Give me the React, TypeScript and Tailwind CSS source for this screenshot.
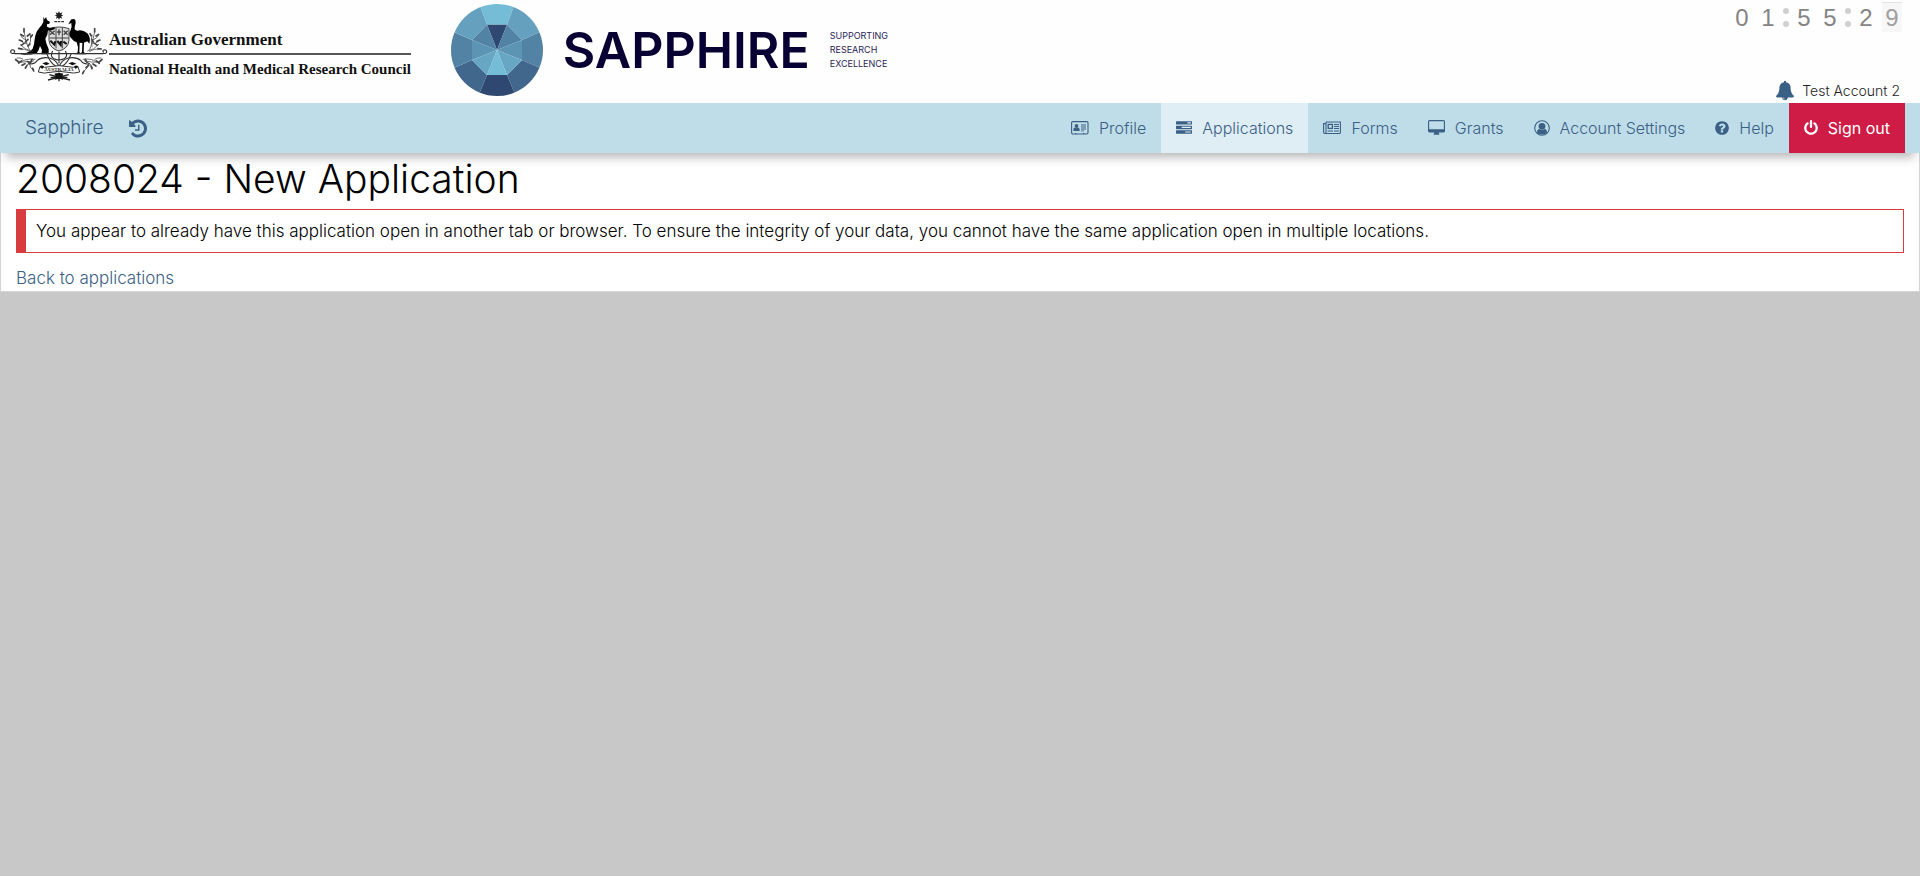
import type { ReactNode } from 'react';

const glyphs = {
  history: {
    box: '0 0 1536 1792',
    d: 'M1536 896q0 156-61 298t-164 245-245 164-298 61q-172 0-327-72.5t-264-204.5q-7-10-6.5-22.5t8.5-20.5l137-138q10-9 25-9 16 2 23 12 73 95 179 147t225 52q104 0 198.5-40.5t163.5-109.5 109.5-163.5 40.5-198.5-40.5-198.5-109.5-163.5-163.5-109.5-198.5-40.5q-98 0-188 35.5t-160 101.5l137 138q31 30 14 69-17 40-59 40h-448q-26 0-45-19t-19-45v-448q0-42 40-59 39-17 69 14l130 129q107-101 244.5-156.5t284.5-55.5q156 0 298 61t245 164 164 245 61 298zm-640-288v448q0 14-9 23t-23 9h-320q-14 0-23-9t-9-23v-64q0-14 9-23t23-9h224v-352q0-14 9-23t23-9h64q14 0 23 9t9 23z',
  },
  tasks: {
    box: '0 0 1792 1792',
    d: 'M1024 1408h640v-128h-640v128zm-384-512h1024v-128h-1024v128zm640-512h384v-128h-384v128zm512 832v256q0 26-19 45t-45 19h-1664q-26 0-45-19t-19-45v-256q0-26 19-45t45-19h1664q26 0 45 19t19 45zm0-512v256q0 26-19 45t-45 19h-1664q-26 0-45-19t-19-45v-256q0-26 19-45t45-19h1664q26 0 45 19t19 45zm0-512v256q0 26-19 45t-45 19h-1664q-26 0-45-19t-19-45v-256q0-26 19-45t45-19h1664q26 0 45 19t19 45z',
  },
  desktop: {
    box: '-64 0 1920 1792',
    d: 'M1728 992v-832q0-13-9.5-22.5t-22.5-9.5h-1600q-13 0-22.5 9.5t-9.5 22.5v832q0 13 9.5 22.5t22.5 9.5h1600q13 0 22.5-9.5t9.5-22.5zm128-832v1088q0 66-47 113t-113 47h-544q0 37 16 77.5t32 71 16 43.5q0 26-19 45t-45 19h-512q-26 0-45-19t-19-45q0-14 16-44t32-70 16-78h-544q-66 0-113-47t-47-113v-1088q0-66 47-113t113-47h1600q66 0 113 47t47 113z',
  },
  help: {
    box: '128 0 1536 1792',
    d: 'M1024 1376v-192q0-14-9-23t-23-9h-192q-14 0-23 9t-9 23v192q0 14 9 23t23 9h192q14 0 23-9t9-23zm256-672q0-88-55.5-163t-138.5-116-170-41q-243 0-371 213-15 24 8 42l132 100q7 6 19 6 16 0 25-12 53-68 86-92 34-24 86-24 48 0 85.5 26t37.5 59q0 38-20 61t-68 45q-63 28-115.5 86.5t-52.5 125.5v36q0 14 9 23t23 9h192q14 0 23-9t9-23q0-19 21.5-49.5t54.5-49.5q32-18 49-28.5t46-35 44.5-48 28-60.5 12.5-81zm384 192q0 209-103 385.5t-279.5 279.5-385.5 103-385.5-103-279.5-279.5-103-385.5 103-385.5 279.5-279.5 385.5-103 385.5 103 279.5 279.5 103 385.5z',
  },
  power: {
    box: '128 0 1536 1792',
    d: 'M1664 896q0 156-61 298t-164 245-245 164-298 61-298-61-245-164-164-245-61-298q0-182 80.5-343t226.5-270q43-32 95.5-25t83.5 50q32 42 24.5 94.5t-49.5 84.5q-98 74-151.5 181t-53.5 228q0 104 40.5 198.5t109.5 163.5 163.5 109.5 198.5 40.5 198.5-40.5 163.5-109.5 109.5-163.5 40.5-198.5q0-121-53.5-228t-151.5-181q-42-32-49.5-84.5t24.5-94.5q31-43 84-50t95 25q146 109 226.5 270t80.5 343zm-640-768v640q0 52-38 90t-90 38-90-38-38-90v-640q0-52 38-90t90-38 90 38 38 90z',
  },
  bell: {
    box: '64 0 1664 1792',
    d: 'M912 1696q0-16-16-16-59 0-101.5-42.5t-42.5-101.5q0-16-16-16t-16 16q0 73 51.5 124.5t124.5 51.5q16 0 16-16zm816-288q0 52-38 90t-90 38h-448q0 106-75 181t-181 75-181-75-75-181h-448q-52 0-90-38t-38-90q50-42 91-88t85-119.5 74.5-158.5 50-206 19.5-260q0-152 117-282.5t307-158.5q-8-19-8-39 0-40 28-68t68-28 68 28 28 68q0 20-8 39 190 28 307 158.5t117 282.5q0 139 19.5 260t50 206 74.5 158.5 85 119.5 91 88z',
  },
};

function Glyph({ name, className }: { name: keyof typeof glyphs; className: string }) {
  return (
    <svg viewBox={glyphs[name].box} className={className} fill="currentColor" aria-hidden="true">
      <path d={glyphs[name].d} />
    </svg>
  );
}

function CardIcon() {
  return (
    <svg viewBox="0 0 18 14" className="h-[14px] w-[18px]" fill="currentColor" aria-hidden="true">
      <rect x="0.6" y="0.6" width="16.4" height="12.4" rx="1.2" fill="none" stroke="currentColor" strokeWidth="1.1" />
      <circle cx="5.5" cy="5" r="1.9" />
      <path d="M2.4 10V8.6Q2.4 6.8 4 6.6Q5.5 7.8 7 6.6Q8.6 6.8 8.6 8.6V10Z" />
      <path d="M10 3.6h5v1h-5zM10 5.6h5v1h-5zM10 7.6h5v1h-5zM10 9.4h3v.8h-3zM4 12h1.4v1H4zM12 12h1.4v1H12z" />
    </svg>
  );
}

function NewsIcon() {
  return (
    <svg viewBox="0 0 18 14" className="h-[14px] w-[18px]" fill="none" stroke="currentColor" aria-hidden="true">
      <path d="M3 1H17.4V11.4Q17.4 12.5 16.3 12.5H1.8Q.6 12.5 .6 11.3V2.6H3M3 1V11.2Q3 12.5 1.8 12.5" strokeWidth="1.1" />
      <rect x="5.2" y="3.4" width="4.2" height="4" strokeWidth="1.3" />
      <path d="M11 3.5h5M11 5.5h5M11 7.5h5M4.6 10h5.4M11 10h5" />
    </svg>
  );
}

function UserIcon() {
  return (
    <svg viewBox="0 0 16 16" className="size-4" fill="currentColor" aria-hidden="true">
      <circle cx="8" cy="8" r="7.3" fill="none" stroke="currentColor" strokeWidth="1.1" />
      <circle cx="8" cy="6.3" r="3.4" />
      <path d="M2.9 12.4Q3.2 9.2 5.4 8.9Q8 11 10.6 8.9Q12.8 9.2 13.1 12.4Q11 14.6 8 14.6T2.9 12.4Z" />
    </svg>
  );
}

function CoatOfArms() {
  return (
    <svg viewBox="0 0 327 300" className="h-[100px] w-[109px] shrink-0" role="img" aria-label="Coat of arms">
      <path d="M177 33l3 7 7-3-3 7 6 2-6 3 2 7-6-3-3 6-3-6-6 3 2-7-6-3 6-2-3-7 7 3z" fill="#222" />
      <path d="M163 65h8M173 65h8M184 65h8" stroke="#333" strokeWidth="4" />
      <g fill="none" stroke="#444" strokeWidth="3">
        <path d="M147 86Q177 76 207 86V122Q204 146 177 153Q150 146 147 122Z" fill="#ddd" />
        <path d="M149 114H206M168 83V145M187 83V145" />
        <path d="M150 92l14 12m0-12l-14 12M191 92l12 12m0-12l-12 12M171 96h12M177 88v18" strokeWidth="4" />
        <path d="M151 122l12 12 3-10M172 123l10 12 1-12M190 125l10 7" stroke="#111" strokeWidth="6" />
      </g>
      <path
        d="M130 50L134 58L138 51L141 60L150 66L148 71L141 73L141 80L150 84L163 82L165 87L151 92L144 91L142 104L136 116L139 130L146 148V163H124L126 150L120 138L116 150L110 160Q90 166 60 164Q84 160 98 146Q103 134 104 118Q106 98 116 86Q126 76 130 66Z"
        fill="#000"
      />
      <path
        d="M222 57Q212 56 210 64L205 73L214 69Q217 80 211 92Q204 102 213 114Q220 124 230 127L234 142L233 157L224 163H243L238 156L239 128L247 129L246 155L241 163H259L251 156L252 128L262 124L268 131Q273 112 262 100Q248 88 232 92Q222 92 224 82Q229 68 226 60Z"
        fill="#000"
      />
      <g fill="none" stroke="#333" strokeWidth="3.5">
        <path d="M44 161H310" strokeWidth="4" />
        <path d="M46 160q-14 2-14-5 1-7 9-5 6 3 0 8M308 160q13 2 12-5-1-7-9-5-5 3 0 7" />
        <path d="M177 202Q171 180 149 174Q125 170 112 181Q104 195 84 191M177 202Q183 180 205 174Q229 170 242 181Q250 195 270 191" />
        <path d="M177 190V155M177 180Q145 176 158 153M177 180Q209 176 196 153M140 160Q150 190 170 200M214 160Q204 190 184 200" />
      </g>
      <path
        d="M120 200Q132 204 150 200Q177 194 204 200Q222 204 234 200L239 216Q220 222 204 217Q177 211 150 217Q134 222 115 216Z"
        fill="#fff"
        stroke="#333"
        strokeWidth="3"
      />
      <path d="M148 224l62 16M206 224l-62 16M177 218v26M152 232h50" fill="none" stroke="#222" strokeWidth="4" />
      <g fill="#111">
        <path d="M119 200q6-7 13-1l-5 8zM235 200q-6-7-13-1l5 8zM163 221l14-3 13 3-4 9 4 9-13-3-13 3 4-9z" />
        <path d="M127 190l12-4 10 5-11 5zM205 190l12-4 12 5-12 5z" />
      </g>
      <g fill="none" stroke="#555" strokeWidth="2.5">
        <path d="M98 153Q75 151 61 132M89 151Q75 128 72 93M84 140Q95 125 92 105M58 147Q74 145 92 155M78 120Q66 116 62 106M82 130Q72 134 63 122" />
        <path d="M262 153Q281 151 297 132M268 151Q280 128 284 93M276 140Q272 122 276 104M300 147Q280 145 268 155M278 120Q290 116 296 106M276 130Q285 134 298 122" />
        <path d="M106 178Q78 174 62 187M102 182Q80 189 76 207M92 184Q66 190 46 181M88 190Q90 205 101 212M70 178Q60 172 50 174" />
        <path d="M248 178Q276 174 292 187M252 182Q274 189 278 207M262 184Q288 190 306 181M266 190Q264 205 248 218M284 178Q294 172 304 174" />
      </g>
      <path
        d="M72 86v10M62 103l8 5M82 108l8-6M58 120l9 4M76 126l8-8M64 136l8-6M56 145l10 2M92 112l5-7M84 138l6-6M284 86v10M296 103l-8 5M274 108l-4-7M300 120l-9 4M280 126l-5-8M292 136l-8-6M304 147l-10-1M47 178l8 8M56 189l9-6M66 196l9-5M76 204l5-8M82 184l9 6M98 205l3 8M306 178l-8 8M298 190l-9-7M288 198l-9-6M276 206l-3-8M266 196l-8 7M252 213l-4 8M96 178l-4 9M256 178l5 9"
        stroke="#444"
        strokeWidth="5"
        strokeLinecap="round"
      />
      <text x="177" y="214" textAnchor="middle" fontSize="15" fontWeight="700" fontFamily="Liberation Serif, serif" fill="#222">
        AUSTRALIA
      </text>
    </svg>
  );
}

function Gem() {
  return (
    <svg viewBox="0 0 276 276" className="size-[92px] shrink-0" role="img" aria-label="Sapphire gem">
      <defs>
        <clipPath id="gem-round">
          <circle cx="138" cy="138" r="138" />
        </clipPath>
      </defs>
      <g clipPath="url(#gem-round)">
        <path d="M108 62L70 -40H206L168 62Z" fill="#75bdd7" />
        <path d="M168 62L206 -40L300 40V70L213 108Z" fill="#65a1bf" />
        <path d="M213 108L290 74V202L213 168Z" fill="#5383a4" />
        <path d="M213 168L290 202L200 290L168 213Z" fill="#41678d" />
        <path d="M168 213L200 290H76L108 213Z" fill="#2f4872" />
        <path d="M108 213L76 290L-14 202L63 168Z" fill="#41678d" />
        <path d="M63 168L-14 202V74L63 108Z" fill="#5383a4" />
        <path d="M63 108L-14 74L70 -40L108 62Z" fill="#65a1bf" />
        <path d="M138 138L108 62H168Z" fill="#2f4872" />
        <path d="M138 138L168 62L213 108ZM138 138L108 62L63 108Z" fill="#5383a4" />
        <path d="M138 138L213 108V168ZM138 138L63 108V168Z" fill="#5c94b3" />
        <path d="M138 138L213 168L168 213ZM138 138L63 168L108 213Z" fill="#67a7c4" />
        <path d="M138 138L168 213H108Z" fill="#75bdd7" />
      </g>
    </svg>
  );
}

function Digit({ value, active = false }: { value: string; active?: boolean }) {
  return (
    <span
      className={
        active
          ? 'mx-[3px] w-5 border-t border-[#e4e4e4] bg-[#f7f7f7] text-center text-[#a0a0a0]'
          : 'mx-[3px] w-5 border-t border-transparent text-center'
      }
    >
      {value}
    </span>
  );
}

function Colon() {
  return (
    <span className="flex w-[10px] flex-col items-center justify-center gap-[7px]">
      <i className="size-[6px] rounded-full bg-[#d0d0d0]" />
      <i className="size-[6px] rounded-full bg-[#d0d0d0]" />
    </span>
  );
}

function NavItem({ icon, label, active = false }: { icon: ReactNode; label: string; active?: boolean }) {
  return (
    <a href="#" className={active ? 'flex items-center gap-[10px] bg-[#dfedf4] px-[15px]' : 'flex items-center gap-[10px] px-[15px]'}>
      {icon}
      {label}
    </a>
  );
}

export default function App() {
  return (
    <div className="min-h-screen bg-[#c8c8c8] font-['Inter',sans-serif] font-light text-black">
      <header className="flex h-[103px] justify-between bg-[#fefefe]">
        <div className="flex items-start">
          <CoatOfArms />
          <div className="pt-[30px] font-['Liberation_Serif',serif] leading-5 font-bold whitespace-nowrap text-[#111]">
            <p className="border-b-2 border-[#555] pb-[3px] text-[17px] leading-5">Australian Government</p>
            <p className="pt-1 text-[15px] leading-5">National Health and Medical Research Council</p>
          </div>
          <div className="flex items-center pt-1 pl-10">
            <Gem />
            <span className="pl-5 text-[50px] leading-[92px] font-semibold text-[#070033]">SAPPHIRE</span>
            <p className="pl-5 text-[9px] leading-[14px] font-normal text-[#2b2556]">
              SUPPORTING
              <br />
              RESEARCH
              <br />
              EXCELLENCE
            </p>
          </div>
        </div>
        <div className="flex flex-col items-end justify-between pt-[2px]">
          <div
            role="timer"
            className="mr-[15px] flex font-['Liberation_Sans',sans-serif] text-2xl leading-[29px] font-normal text-[#848484]"
          >
            <Digit value="0" />
            <Digit value="1" />
            <Colon />
            <Digit value="5" />
            <Digit value="5" />
            <Colon />
            <Digit value="2" />
            <Digit value="9" active />
          </div>
          <div className="mr-5 flex items-center gap-2 pb-[2px] text-sm text-[#222]">
            <Glyph name="bell" className="h-[21px] w-[18px] text-[#3b6086]" />
            Test Account 2
          </div>
        </div>
      </header>
      <nav className="relative flex h-[50px] justify-between bg-[#bfdde8] pr-[15px] text-base text-[#3b6086] shadow-[0_10px_10px_-6px_rgba(0,0,0,0.3)]">
        <div className="flex items-center gap-[26px] pl-[25px]">
          <a href="#" className="text-[19px]">
            Sapphire
          </a>
          <button type="button" aria-label="History">
            <Glyph name="history" className="h-[21px] w-[18px]" />
          </button>
        </div>
        <div className="flex">
          <NavItem icon={<CardIcon />} label="Profile" />
          <NavItem icon={<Glyph name="tasks" className="size-4" />} label="Applications" active />
          <NavItem icon={<NewsIcon />} label="Forms" />
          <NavItem icon={<Glyph name="desktop" className="h-4 w-[17px]" />} label="Grants" />
          <NavItem icon={<UserIcon />} label="Account Settings" />
          <NavItem icon={<Glyph name="help" className="h-4 w-[14px]" />} label="Help" />
          <button type="button" className="flex items-center gap-[10px] bg-[#ce1c46] px-[15px] font-normal text-white">
            <Glyph name="power" className="h-4 w-[14px]" />
            Sign out
          </button>
        </div>
      </nav>
      <main className="border border-t-0 border-[#d4d4d4] bg-white px-[15px]">
        <h1 className="pt-[3px] text-[39px] leading-[45px]">2008024 - New Application</h1>
        <p className="mt-2 border border-l-[10px] border-[#d83c3e] px-[10px] py-[10px] text-[17px] leading-[22px]">
          You appear to already have this application open in another tab or browser. To ensure the integrity of your data, you
          cannot have the same application open in multiple locations.
        </p>
        <p className="pt-[13px] pb-px text-[17px] leading-6">
          <a href="#" className="text-[#3b6086]">
            Back to applications
          </a>
        </p>
      </main>
    </div>
  );
}
